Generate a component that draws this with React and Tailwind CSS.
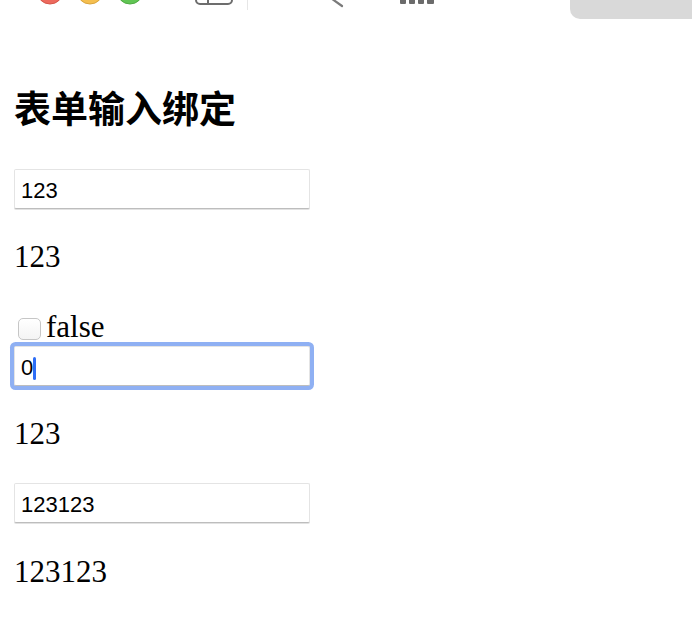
import React, { useState } from "react";

const serif = "font-['Liberation_Serif','Times_New_Roman',serif]";
const inputBase =
  "block w-[296px] h-[40px] pl-[6px] pt-[4px] border border-[#e4e4e4] border-b-[#bdbdbd] rounded-[2px] bg-white text-[22px] text-black outline-none font-['Liberation_Sans',Arial,sans-serif]";
const inputCls = `${inputBase} shadow-[0_1px_0_#e2e2e2]`;
const focusedCls = `${inputBase} caret-transparent shadow-[0_0_0_4px_#8fb0f3]`;

const BrowserChrome = () => {
  return (
    <div className="flex h-[20px] w-full overflow-hidden">
      <div className="w-[570px] h-[20px]">
        <svg width="570" height="20" viewBox="0 0 570 20">
          {/* traffic lights */}
          <circle cx="50" cy="-9" r="13" fill="#ed6a5e" stroke="#d65548" strokeWidth="1" />
          <circle cx="90" cy="-9" r="13" fill="#f5bf4f" stroke="#d9a43c" strokeWidth="1" />
          <circle cx="130" cy="-9" r="13" fill="#61c554" stroke="#4eab42" strokeWidth="1" />
          {/* sidebar icon */}
          <rect x="196" y="-20" width="36" height="24" rx="4" fill="none" stroke="#6d6d6d" strokeWidth="2" />
          <line x1="208" y1="-20" x2="208" y2="4" stroke="#6d6d6d" strokeWidth="2" />
          {/* separator */}
          <line x1="247.5" y1="0" x2="247.5" y2="10" stroke="#e6e6e6" strokeWidth="1" />
          {/* chevron */}
          <path d="M328 -4 L342 6" fill="none" stroke="#7a7a7a" strokeWidth="2.2" strokeLinecap="round" />
          {/* bars */}
          <rect x="400" y="-4" width="6" height="8" rx="1" fill="#6b6b6b" />
          <rect x="409" y="-4" width="6" height="8" rx="1" fill="#6b6b6b" />
          <rect x="418" y="-4" width="6" height="8" rx="1" fill="#6b6b6b" />
          <rect x="427" y="-4" width="7" height="8" rx="1" fill="#6b6b6b" />
        </svg>
      </div>
      <div className="flex-1 h-[19px] bg-[#d9d9d9] rounded-bl-[10px]" />
    </div>
  );
};

const App = () => {
  const [msg, setMsg] = useState("123");
  const [checked, setChecked] = useState(false);
  const [num, setNum] = useState("0");
  const [lazy, setLazy] = useState("123123");

  return (
    <div className="min-h-screen w-full bg-white text-black">
      <BrowserChrome />

      <div className="pl-[14px] flex flex-col items-start">
        {/* heading */}
        <h3 className="mt-[67px] text-[37px] leading-[40px] font-bold font-['Noto_Sans_CJK_SC',sans-serif]">
          表单输入绑定
        </h3>

        {/* text input */}
        <input
          type="text"
          value={msg}
          onChange={(e) => setMsg(e.target.value)}
          className={`mt-[42px] ${inputCls}`}
        />
        <p className={`mt-[31px] text-[31px] leading-[34px] ${serif}`}>{msg}</p>

        {/* checkbox */}
        <div className="mt-[36px] flex items-start h-[34px]">
          <input
            type="checkbox"
            checked={checked}
            onChange={(e) => setChecked(e.target.checked)}
            className="appearance-none ml-[4px] mt-[8px] w-[23px] h-[22px] rounded-[5px] border border-[#c6c6c6] bg-gradient-to-b from-white to-[#f4f4f4]"
          />
          <span className={`ml-[5px] text-[31px] leading-[34px] ${serif}`}>
            {checked ? "true" : "false"}
          </span>
        </div>

        {/* focused number input */}
        <div className="relative mt-[2px]">
          <input
            type="text"
            value={num}
            onChange={(e) => setNum(e.target.value)}
            className={focusedCls}
          />
          <span className="absolute left-[19px] top-[11px] w-[3px] h-[23px] rounded-full bg-[#2d6df6]" />
        </div>
        <p className={`mt-[31px] text-[31px] leading-[34px] ${serif}`}>{msg}</p>

        {/* lazy input */}
        <input
          type="text"
          value={lazy}
          onChange={(e) => setLazy(e.target.value)}
          className={`mt-[32px] ${inputCls}`}
        />
        <p className={`mt-[32px] text-[31px] leading-[34px] ${serif}`}>{lazy}</p>
      </div>
    </div>
  );
};

export default App;
